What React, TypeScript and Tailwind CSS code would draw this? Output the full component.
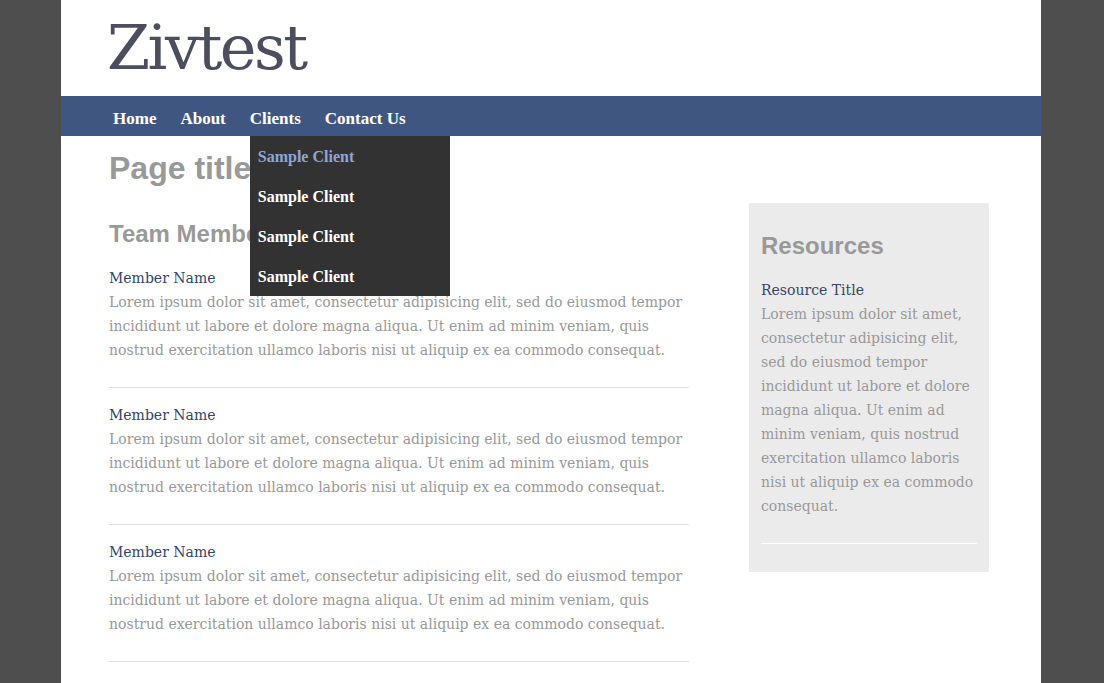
import React from 'react';

const NAV = ['Home', 'About', 'Clients', 'Contact Us'];
const CLIENTS = ['Sample Client', 'Sample Client', 'Sample Client', 'Sample Client'];
const LOREM =
  'Lorem ipsum dolor sit amet, consectetur adipisicing elit, sed do eiusmod tempor incididunt ut labore et dolore magna aliqua. Ut enim ad minim veniam, quis nostrud exercitation ullamco laboris nisi ut aliquip ex ea commodo consequat.';

const serif = "font-['DejaVu_Serif',Georgia,serif]";
const navFont = "font-['Liberation_Serif',Georgia,serif]";
const sans = "font-['Liberation_Sans',Arial,sans-serif]";

export default function App() {
  return (
    <div className={`min-h-screen bg-[#4e4e4e] ${serif}`}>
      <div className="ml-[61px] w-[980px] min-h-[683px] bg-white">
        {/* Header */}
        <header className="h-[96px] pl-[46px] pt-[8px]">
          <div className="text-[62px] leading-[80px] tracking-[-2.5px] text-[#4a4e5e]">Zivtest</div>
        </header>

        {/* Nav */}
        <nav className={`h-10 bg-[#3f5780] ${navFont}`}>
          <ul className="flex h-full items-center gap-6 pl-[52px]">
            {NAV.map((item) => (
              <li key={item} className="relative flex h-full items-center pt-[6px]">
                <a className="text-[17px] font-bold text-white">{item}</a>
                {item === 'Clients' && (
                  <ul className="absolute left-0 top-full z-10 w-[200px] bg-[#323232]">
                    {CLIENTS.map((c, i) => (
                      <li key={i} className="flex h-10 items-center px-2 pt-[1px]">
                        <a className={`text-[16px] font-bold ${i === 0 ? 'text-[#8ea6d8]' : 'text-white'}`}>{c}</a>
                      </li>
                    ))}
                  </ul>
                )}
              </li>
            ))}
          </ul>
        </nav>

        {/* Content */}
        <div className="flex pl-[48px]">
          <main className="w-[580px] pt-3">
            <h1 className={`${sans} text-[32px] font-bold leading-10 text-[#999]`}>Page title</h1>
            <h2 className={`${sans} mt-[30px] text-[24px] font-bold leading-8 text-[#999]`}>Team Members</h2>
            <div className="mt-4">
              {[0, 1, 2].map((i) => (
                <div key={i} className="mb-[15px] border-b border-[#dddddd] pb-[25px]">
                  <h3 className="text-[14px] leading-6 text-[#33466c]">Member Name</h3>
                  <p className="text-[14px] leading-6 text-[#999]">{LOREM}</p>
                </div>
              ))}
            </div>
          </main>

          <aside className="ml-[60px] mt-[67px] h-fit w-[240px] bg-[#ebebeb] px-3 pb-[28px] pt-[27px]">
            <h2 className={`${sans} text-[24px] font-bold leading-8 text-[#999]`}>Resources</h2>
            <div className="mt-4 border-b border-white pb-[25px]">
              <h3 className="text-[14px] leading-6 text-[#33466c]">Resource Title</h3>
              <p className="text-[14px] leading-6 text-[#999]">{LOREM}</p>
            </div>
          </aside>
        </div>
      </div>
    </div>
  );
}
